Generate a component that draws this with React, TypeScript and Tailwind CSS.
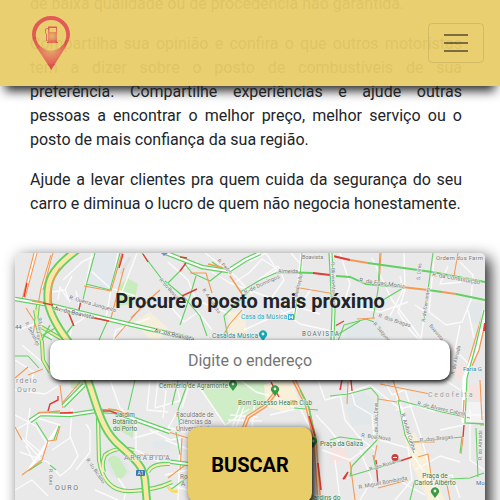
import React from "react";

const GREEN = "#63d063";
const ORANGE = "#f59a55";
const RED = "#e23b36";

const minorStreets = [
  "M18 330L40 322L52 338M22 345L35 356L46 366M15 360L34 372L30 384M52 292L65 290L72 276M58 300L60 287L68 300M65 290L70 302M63 280L82 262L96 255",
  "M84 318L72 326L70 336M76 291L82 318M90 270L110 288L135 296M92 253L86 284M118 253L111 290L106 318M137 253L122 292M112 345L116 330L150 318",
  "M168 262L188 280L196 300L230 314M180 270L196 262L230 283L276 300L320 314M165 300L184 322L198 312L212 330M205 253L234 275L252 294M248 262L266 253L277 270L262 279",
  "M234 283L250 272L262 259L276 268M270 300L284 280L278 266L258 280M280 310L300 324L336 332M244 330L270 318L298 308L312 288M291 253L302 266L300 288L284 310",
  "M340 253L350 284L345 300M372 258L392 300L415 330L425 345M404 253L405 290L398 312L410 330L424 345M333 300L360 308L380 312L408 302M390 316L403 290L400 276",
  "M434 258L429 312L446 325L462 322L471 300L473 275L460 262M448 266L440 284L462 282M415 305L425 312L420 345M460 325L455 350L475 370M468 310L474 338",
  "M15 390L45 394L58 386M15 415L36 426L46 442M20 452L48 462L60 476L70 468L78 456L70 436M15 430L37 418L60 425M30 408L26 440L44 455M52 450L70 438L72 408",
  "M76 470L90 452L90 430L86 424M15 490L32 480L48 496M26 445L34 462M22 438L40 458M110 380L120 408L136 424L136 450L160 462M134 438L170 428L185 432",
  "M150 380L147 410L168 412M158 380L155 408L182 400M166 390L163 418M168 380L188 388L182 408M165 440L190 450M176 382L181 405L168 428",
  "M200 388L225 425L249 409M220 388L240 380L256 392L278 398L295 408M240 405L232 428M244 407L235 430M228 420L262 421M230 415L258 417M255 400L252 428",
  "M270 415L300 408L316 440M318 380L325 400L340 396L370 385L404 412M340 394L345 420L360 438L375 450M350 385L355 405L372 415L375 445M322 450L350 460L375 442",
  "M335 460L340 500M360 450L372 480L360 500M380 440L408 448L412 480L395 500M405 390L422 440L438 500M396 410L415 405L435 412M384 380L392 395L404 390",
  "M415 470L440 456L460 462M413 455L434 488M425 480L452 475L460 498M445 380L468 395M470 410L470 460L484 470M468 415L484 415M440 430L464 425M398 480L425 495",
  "M316 415L330 430L344 448M170 460L188 465M165 475L188 470M180 440L178 500M168 485L188 490M118 478L126 490L124 500M150 430L170 440L188 437M95 490L118 500",
];

const greenStreets = [
  "M95 253L87 282L83 300M86 284L110 290L120 253M142 253L170 290M183 268L165 286M165 281L184 297L200 316L207 336",
  "M184 263L192 273L210 281L224 270L212 262M180 325L190 296L196 276M240 292L262 279L276 273L302 273M302 253L300 278L294 320M338 341L344 325L366 319L374 322",
  "M380 253L378 290L373 318M433 253L430 275L424 320M403 288L383 300M332 338L360 321M108 320L99 340M15 356L28 356L39 368M59 426L54 440",
  "M42 462L28 471M50 465L56 470M36 422L48 441M135 380L128 410M188 382L178 410L180 432M178 380L172 405M294 408L318 410M330 396L348 394L371 388L378 396",
  "M398 400L442 412L470 418M398 400L405 435L414 453M413 442L462 437L460 453M330 440L340 437L362 440M378 396L377 440L352 466L350 476L400 461",
  "M450 479L470 478L484 473M415 480L410 500M476 428L478 477M373 455L376 470M180 455L176 432M170 490L188 477M228 338L224 316L250 290",
];

const orangeStreets = [
  "M37 253L25 298M34 253L22 300M51 255L41 288L38 305M53 253L43 290M26 308L35 322L33 335M84 286L111 291L122 253M124 268L111 318M131 318L152 297L160 290",
  "M145 303L115 338M190 273L206 273L212 293M300 288L335 294M242 310L229 325L222 338M381 253L379 285M458 253L454 276M483 312L472 350L465 375M375 318L357 319",
  "M60 385L63 408M80 382L63 402M48 441L56 440L60 426M48 441L42 460L22 475M15 427L22 440M165 431L188 438M182 438L180 470M168 478L188 463",
  "M393 380L400 402M348 382L347 404M380 384L430 394M378 399L397 402M350 462L355 500M377 445L374 460M462 390L464 420M480 380L482 420M463 438L461 454",
  "M418 457L428 454L432 482M412 442L435 442M446 480L450 500M15 378L28 367M43 369L28 375M480 425L484 425M378 488L408 480M140 455L168 456",
];

const redStreets = [
  "M27 283L24 297M123 254L119 268M186 263L180 271M182 296L197 289M81 300L79 310M335 326L344 321M143 254L148 262M58 396L58 400L50 404L48 411",
  "M271 382L279 397M464 425L463 437M376 460L378 485M400 461L412 457M342 380L340 390M351 380L352 391M343 479L348 472L345 478Z",
];

const avenues = [
  "M15 299L50 305L107 319L192 339",
  "M166 253L202 267L228 271",
  "M228 271L245 260L260 253",
  "M30 421L40 414L70 415L96 411",
  "M100 411L116 412L134 419L170 432",
  "M165 461L188 464",
  "M84 385L63 406",
];

const motorway =
  "M77 250C50 270 46 282 48 303C53 324 68 341 77 353C84 365 86 375 91 389C97 408 103 429 115 441C130 456 143 463 145 480L148 515";
const loops =
  "M98 418L99 460Q104 493 132 491Q156 490 172 482M134 450Q116 446 105 455Q101 464 104 472M148 472Q152 463 170 464";
const ramps = "M38 305L36 322L42 342L43 360L50 372M35 310L38 325L60 338L69 345";

type LabelProps = {
  x: number;
  y: number;
  children: string;
  rotate?: number;
  size?: number;
  fill?: string;
  anchor?: "start" | "middle" | "end";
  spacing?: number;
  length?: number;
};

function Label({ x, y, children, rotate = 0, size = 6, fill = "#77797a", anchor = "start", spacing = 0, length }: LabelProps) {
  return (
    <text
      x={x}
      y={y}
      fontSize={size}
      fill={fill}
      textAnchor={anchor}
      letterSpacing={spacing}
      textLength={length}
      transform={rotate ? `rotate(${rotate} ${x} ${y})` : undefined}
      stroke="#f1f1f1"
      strokeWidth={1}
      paintOrder="stroke"
    >
      {children}
    </text>
  );
}

function Pin({ x, y, fill }: { x: number; y: number; fill: string }) {
  return (
    <g transform={`translate(${x} ${y})`}>
      <path d="M0 6L-3 2A4 4 0 1 1 3 2Z" fill={fill} />
      <circle r="1.4" cy="-1" fill="#eef6ee" />
    </g>
  );
}

function TrafficMap() {
  return (
    <svg
      className="absolute inset-0 h-full w-full rounded-[5px] font-['Roboto',sans-serif]"
      viewBox="15 253 470 260"
      preserveAspectRatio="none"
      fill="none"
      aria-hidden="true"
    >
      <rect x="15" y="253" width="470" height="260" fill="#e9e9e9" />

      <path d="M93 266L114 272L109 289L87 284ZM94 254L119 254L115 272L93 266Z" fill="#e3e8ec" />
      <path d="M120 285L127 278L138 284L134 304L116 306Z" fill="#c9ecbf" />
      <path d="M200 388L230 376L262 379L280 397L226 424Z" fill="#cfedc6" />
      <path d="M70 380L85 380L80 390L71 388ZM115 420L134 423L133 438L120 431Z" fill="#cbe9bf" />
      <path d="M134 322L150 312L168 328L155 345ZM228 312L244 310L248 340L230 340Z" fill="#f5efdc" />
      <path d="M264 385L290 376L300 404L284 412L266 406ZM404 436L415 433L422 448L436 480L445 500L428 500L412 465Z" fill="#f8f0d8" />
      <path d="M342 398L364 392L374 400L372 424L352 426ZM152 442L170 440L170 450L154 448ZM347 322L378 318L385 335L365 345L345 340ZM469 302L483 304L481 325L470 322Z" fill="#e2e7ea" />
      <path d="M468 386L480 384L480 399L469 400ZM330 450L345 446L349 460L332 464ZM455 364L470 366L466 382L456 378Z" fill="#f6e3e0" />
      <path d="M104 457C106 448 116 448 124 458L130 472C124 482 114 480 108 470Z" fill="#e2e6ea" />
      <path d="M108 460Q112 452 119 458L127 471Q123 481 117 478Z" fill="#c9ebbd" />
      <path d="M121 273L130 257" stroke="#d3d3d3" strokeWidth="3" strokeDasharray="1 1" />
      <path d="M467 402L483 402L482 422L466 422Z" fill="#f3f3f3" />

      <g stroke="#fbfbfb" strokeWidth="1.4" strokeLinejoin="round">
        {minorStreets.map((d) => <path key={d} d={d} />)}
      </g>
      <path d="M36 253L24 298M52 255L42 288M294 320L302 253M397 395L414 453M59 426L46 445L28 471" stroke="#fff" strokeWidth="3" />
      <g stroke={GREEN} strokeWidth="1.1" strokeLinejoin="round">
        {greenStreets.map((d) => <path key={d} d={d} />)}
      </g>
      <g stroke={ORANGE} strokeWidth="1.1" strokeLinejoin="round">
        {orangeStreets.map((d) => <path key={d} d={d} />)}
      </g>
      <g stroke={RED} strokeWidth="1.4">
        {redStreets.map((d) => <path key={d} d={d} />)}
      </g>

      {avenues.map((d) => (
        <g key={d}>
          <path d={d} stroke={GREEN} strokeWidth="4.6" />
          <path d={d} stroke="#fff" strokeWidth="2.2" />
        </g>
      ))}
      <path d="M94 318L109 321M60 413L73 412.500M100 411L110 411L125 416M180 257L187 258" stroke={RED} strokeWidth="1.6" />
      <path d="M38 413L60 411M108 409L116 410L134 417M32 301L43 303M208 264L228 269M230 276L242 294" stroke={ORANGE} strokeWidth="1.5" />

      <path d="M333 256L350 260M313 273L330 275" stroke={RED} strokeWidth="2" />
      <path d="M350 260L368 263M402 287L428 290M442 292L456 294" stroke={ORANGE} strokeWidth="1.8" />
      <path d="M368 263L432 272L485 282M280 272L313 273M336 276L350 277L366 284L402 287M428 290L442 292M456 294L485 300" stroke={GREEN} strokeWidth="1.8" />
      <path d="M485 310L478 345L465 378L464 423" stroke="#fff" strokeWidth="5" />
      <path d="M484 310L476 345L467 378L465 423L484 424" stroke={GREEN} strokeWidth="1.3" />
      <path d="M485 324L479 350L472 366M464 400L463 418" stroke={ORANGE} strokeWidth="1.4" />
      <path d="M485 323L484 331" stroke={RED} strokeWidth="2" />
      <path d="M332 253L334 340" stroke="#f7f7f7" strokeWidth="4" />
      <path d="M332 253L335 310L334 340M329 253L332 310L331 340" stroke={GREEN} strokeWidth="1.2" />

      <path d={ramps} stroke={GREEN} strokeWidth="4" />
      <path d={ramps} stroke="#f3e6a4" strokeWidth="2" />
      <path d="M50 325L42 340M57 327L43 335L52 340M68 310L73 325L66 334" stroke={GREEN} strokeWidth="1.3" />
      <path d="M69 314L74 326" stroke={RED} strokeWidth="1.4" />
      <path d={loops} stroke={GREEN} strokeWidth="4.2" />
      <path d={loops} stroke="#f9edbd" strokeWidth="2" />
      <path d={motorway} stroke={GREEN} strokeWidth="8.4" />
      <path d={motorway} stroke="#fce8a6" strokeWidth="4.6" />
      <path d="M60 268Q49 283 50 303" stroke={ORANGE} strokeWidth="1.5" />
      <path d="M43 303L53 305" stroke={RED} strokeWidth="1.4" />
      <path d="M168 487Q172 493 178 491" stroke="#f8dc68" strokeWidth="3" />

      <path d="M294 380L307 406L315 440L320 513" stroke={ORANGE} strokeWidth="4" />
      <path d="M294 380L307 406L315 440L320 513" stroke="#fbe2cf" strokeWidth="1.2" />
      <path d="M300 390L309 408L316 441" stroke={GREEN} strokeWidth="1.500" />
      <path d="M309 416L315 436M318 463L321 490" stroke={RED} strokeWidth="1.600" />
      <path d="M276 392L265 406L248 417L243 430" stroke={ORANGE} strokeWidth="4" />
      <path d="M276 392L265 406L248 417L243 430" stroke="#fae4d4" strokeWidth="1.300" />

      <Label x={69} y={299} rotate={16} size={5.5}>R. Guerra Junqueiro</Label>
      <Label x={54} y={310} rotate={13} fill="#5c5c5c">Av. da Boavista</Label>
      <Label x={154} y={332} rotate={13} fill="#5c5c5c">Av. da Boavista</Label>
      <Label x={38} y={346} rotate={-82} size={5}>R. do Campo</Label>
      <Label x={25} y={323} rotate={62} size={5}>R. Serralves</Label>
      <Label x={159} y={280} rotate={48} size={5}>R. do Bessa</Label>
      <Label x={202} y={290} rotate={56} size={5}>R. Arquitecto</Label>
      <Label x={217} y={261} rotate={45} size={5}>R. Pedro</Label>
      <Label x={245} y={294} rotate={-25} size={5.5}>R. de Domingos</Label>
      <Label x={278} y={273} size={5.5}>Almeida</Label>
      <Label x={296} y={303} rotate={-77} size={5}>R. Meditação</Label>
      <Label x={331} y={262} rotate={88} size={5}>R. Oliveira Monteiro</Label>
      <Label x={302} y={259} size={5.5}>Boavista</Label>
      <Label x={359} y={282} rotate={8} size={6}>R. de Egas Moniz</Label>
      <Label x={432} y={276} rotate={10} size={6}>R. da Constituição</Label>
      <Label x={378} y={317} rotate={18} size={5.5}>R. dos Bragas</Label>
      <Label x={425} y={322} rotate={-82} size={5}>R. de Cervantes</Label>
      <Label x={420} y={280} rotate={-85} size={5}>S. Dinis</Label>
      <Label x={454} y={375} rotate={-77} size={5}>R. do Almada</Label>
      <Label x={429} y={326} rotate={50} size={5}>Boavista</Label>
      <Label x={373} y={324} rotate={50} size={5}>R. Salgueiros</Label>
      <Label x={86} y={460} rotate={55} size={5}>R. do Bicalho</Label>
      <Label x={49} y={469} rotate={89} size={5}>R. Ouro</Label>
      <Label x={378} y={438} rotate={-90} size={5}>R. de Júlio Dinis</Label>
      <Label x={361} y={437} rotate={7} size={5.5}>R. Boa Nova</Label>
      <Label x={420} y={442} rotate={-6} size={5.5}>R. dos Bragas</Label>
      <Label x={401} y={414} rotate={73} size={5.5}>R. Aníbal Cunha</Label>
      <Label x={417} y={405} rotate={13} size={5.5}>R. de Álvares Cabral</Label>
      <Label x={370} y={471} rotate={-17} size={5.5}>R. do Rosário</Label>
      <Label x={359} y={489} rotate={-11} size={5.5}>R. Miguel Bombarda</Label>
      <Label x={482} y={460} rotate={-90} size={5}>R. do Almada</Label>

      <Label x={436} y={260} size={6} length={47}>Ordem dos Farm</Label>
      <Label x={241} y={319} size={6.5} fill="#2da6bd" length={46}>Casa da Música</Label>
      <rect x="288" y="314" width="6" height="6" fill="#3cafe0" />
      <path d="M289.500 319V315.500L291 318L292.500 315.500V319" stroke="#fff" strokeWidth=".8" />
      <Label x={212} y={338} size={6.5} fill="#218f9e" length={46}>Casa da Música</Label>
      <Pin x={263} y={335} fill="#12a8b3" />
      <Label x={302} y={336} size={6.3} fill="#606c76" spacing={1.1}>BOAVISTA</Label>
      <Label x={15} y={329} size={6} fill="#2b8291">44</Label>
      <Label x={16} y={383} size={7} fill="#8b8f96" spacing={1.3}>rdelo</Label>
      <Label x={17} y={392} size={7} fill="#8b8f96" spacing={1.3}>Ouro</Label>
      <Label x={55} y={490} size={7} fill="#65717c" spacing={1.5}>OURO</Label>
      <Label x={124} y={460} size={7} fill="#7b83a0" spacing={1.8}>ARRÁBIDA</Label>
      <rect x="136" y="470" width="9" height="6" rx="1" fill="#3a75b5" />
      <text x="140.500" y="475.200" fontSize="5" textAnchor="middle" fill="#fff">A1</text>
      <Label x={125} y={417} size={6.3} anchor="middle" fill="#397c3b">Jardim</Label>
      <Label x={125} y={424} size={6.3} anchor="middle" fill="#397c3b">Botânico</Label>
      <Label x={125} y={431} size={6.3} anchor="middle" fill="#397c3b">do Porto</Label>
      <Label x={159} y={388} size={6.3} fill="#397c3b" length={69}>Cemitério de Agramonte</Label>
      <Pin x={233} y={385} fill="#399a46" />
      <Pin x={275} y={390} fill="#399a46" />
      <Label x={238} y={405} size={6.3} fill="#397c3b" length={74}>Bom Sucesso Health Club</Label>
      <Label x={195} y={417} size={6.3} anchor="middle">Faculdade de</Label>
      <Label x={195} y={424} size={6.3} anchor="middle">Ciências da</Label>
      <Label x={194} y={431} size={6.3} anchor="middle">Universidade</Label>
      <Label x={180} y={479} size={6.3}>Ro</Label>
      <Label x={181} y={486} size={6.3}>A</Label>
      <Pin x={313} y={442} fill="#2d8b3b" />
      <Label x={320} y={446} size={6.5} fill="#397c3b" length={43}>Praça da Galiza</Label>
      <Label x={310} y={500} size={6.5} fill="#397c3b">Jardins do</Label>
      <Label x={428} y={397} size={7} fill="#999ca3" spacing={1.8}>Cedofeita</Label>
      <Label x={463} y={371} size={6} fill="#2f91b7">Faria G</Label>
      <Label x={435} y={478} size={6.5} anchor="middle" fill="#397c3b">Praça de</Label>
      <Label x={435} y={485} size={6.5} anchor="middle" fill="#397c3b">Carlos Alberto</Label>
      <Pin x={435} y={492} fill="#399a46" />
      <Label x={476} y={485} size={6} fill="#3276b1">Mo</Label>
      <circle cx="395" cy="457.500" r="3.500" fill="#c44340" />
      <path d="M393 457.500H397" stroke="#fff" strokeWidth="1" />
      <path d="M161 253L164 256L168 253Z" fill="#7b88ce" />
    </svg>
  );
}

function Logo() {
  return (
    <svg className="h-[54px] w-[38px]" viewBox="0 0 38 54" fill="none" role="img" aria-label="Posto">
      <defs>
        <radialGradient id="pinFill" gradientUnits="userSpaceOnUse" cx="19" cy="33" r="16">
          <stop offset="0" stopColor="#e3ad63" />
          <stop offset="1" stopColor="#e2514c" />
        </radialGradient>
        <radialGradient id="pumpFill" gradientUnits="userSpaceOnUse" cx="20" cy="20" r="9">
          <stop offset="0" stopColor="#e5b562" />
          <stop offset="1" stopColor="#e2514c" />
        </radialGradient>
      </defs>
      <path
        fillRule="evenodd"
        fill="url(#pinFill)"
        d="M19 0C8.500 0 0 8.200 0 18.500C0 23 2.500 27.500 5 32L19.300 54L33 32C35.500 27.500 38 23 38 18.500C38 8.200 29.500 0 19 0ZM19 4A15 15 0 1 1 19 34.500A15 15 0 1 1 19 4Z"
      />
      <path fillRule="evenodd" fill="url(#pumpFill)" d="M16 10.500H25V26H26V27H15V26H16ZM17.500 12V16H24V12Z" />
      <path d="M16 12.500L13.500 13V17L14.500 18V24.500L16 25" stroke="#e2605a" strokeWidth=".9" />
    </svg>
  );
}

function Header() {
  return (
    <header className="absolute inset-x-0 top-0 z-10 flex h-[86px] items-center justify-between bg-[#e9cd69] pr-4 pl-8 opacity-95 shadow-[0_10px_10px_-5px_#222]">
      <Logo />
      <button
        type="button"
        aria-label="Menu"
        className="flex h-10 w-14 flex-col items-center justify-center gap-1.5 rounded border border-black/10"
      >
        <span className="h-0.5 w-6 bg-black/50" />
        <span className="h-0.5 w-6 bg-black/50" />
        <span className="h-0.5 w-6 bg-black/50" />
      </button>
    </header>
  );
}

export default function App() {
  return (
    <div className="relative h-[500px] w-[500px] overflow-hidden bg-white font-['Roboto',sans-serif] text-base leading-6 text-[#212529]">
      <Header />
      <main className="-mt-2">
        <section className="flex flex-col gap-4 pr-[38px] pl-[30px] text-justify">
          <p>de baixa qualidade ou de procedência não garantida.</p>
          <p>
            Compartilha sua opinião e confira o que outros motoristas tem a dizer sobre o posto de
            combustíveis de sua preferência. Compartilhe experiências e ajude outras pessoas a
            encontrar o melhor preço, melhor serviço ou o posto de mais confiança da sua região.
          </p>
          <p>
            Ajude a levar clientes pra quem cuida da segurança do seu carro e diminua o lucro de
            quem não negocia honestamente.
          </p>
        </section>

        <section className="relative mx-[15px] mt-[37px] flex h-[260px] flex-col items-center rounded-[5px] px-[35px] pt-9 shadow-[5px_5px_15px_#222]">
          <TrafficMap />
          <h2 className="relative text-xl leading-6 font-bold">Procure o posto mais próximo</h2>
          <input
            placeholder="Digite o endereço"
            className="relative mt-[27px] h-10 w-full rounded-[10px] bg-white text-center shadow-[1px_2px_5px_#000] placeholder:text-[#757575]"
          />
          <button
            type="button"
            className="relative mt-[47px] h-[76px] w-[124px] shrink-0 rounded-[10px] bg-[#e9cd69] text-xl font-bold text-black shadow-[3px_3px_8px_#000]"
          >
            BUSCAR
          </button>
        </section>
      </main>
    </div>
  );
}
